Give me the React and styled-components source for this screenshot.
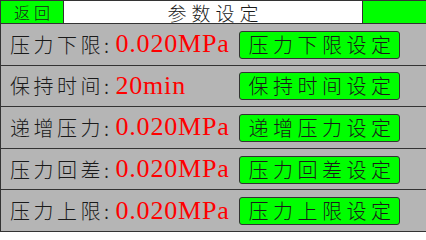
import React from 'react';
import styled, { createGlobalStyle } from 'styled-components';

const GlobalStyle = createGlobalStyle`
  html, body {
    margin: 0;
    padding: 0;
    background: #ffffff;
  }
`

const cjk = `"Noto Sans CJK SC", "Noto Sans", sans-serif`

const Frame = styled.div`
  width: 426px;
  border-top: 1px solid #333;
  border-left: 1px solid #333;
  box-sizing: border-box;
  background: #b5b5b5;
`

const Header = styled.div`
  display: flex;
  height: 23px;
  border-bottom: 1px solid #333;
  box-sizing: border-box;
`

const BackCell = styled.div`
  width: 62px;
  background: #00ff00;
  display: flex;
  align-items: center;
  justify-content: center;
  font-family: ${cjk};
  font-weight: 300;
  font-size: 16px;
  letter-spacing: 4px;
  padding-left: 4px;
  box-sizing: border-box;
  color: #1a1a1a;
  line-height: 1;
`

const TitleCell = styled.div`
  flex: 1;
  background: #ffffff;
  border-left: 1px solid #333;
  border-right: 1px solid #333;
  display: flex;
  align-items: center;
  justify-content: center;
  font-family: ${cjk};
  font-weight: 300;
  font-size: 19px;
  letter-spacing: 5px;
  padding-left: 5px;
  color: #1a1a1a;
  line-height: 1;
`

const SideCell = styled.div`
  width: 63px;
  background: #00ff00;
`

const Row = styled.div`
  display: grid;
  grid-template-columns: 238px 161px;
  align-items: center;
  height: 41.6px;
  border-bottom: 1px solid #333;
  box-sizing: border-box;
`

const Info = styled.div`
  display: flex;
  align-items: center;
  padding-left: 9px;
  white-space: nowrap;
`

const Label = styled.span`
  font-family: ${cjk};
  font-weight: 300;
  font-size: 20px;
  letter-spacing: 3.5px;
  color: #1a1a1a;
`

const Value = styled.span`
  font-family: "Liberation Serif", serif;
  font-size: 26px;
  letter-spacing: 0.8px;
  color: #ff0000;
  margin-left: 3px;
`

const SetButton = styled.button`
  height: 28px;
  width: 161px;
  margin-top: 1px;
  background: #00ff00;
  border: 1px solid #333;
  border-radius: 3px;
  font-family: ${cjk};
  font-weight: 300;
  font-size: 20px;
  letter-spacing: 4.5px;
  padding: 0 0 0 5px;
  color: #1a1a1a;
  line-height: 1;
  display: flex;
  align-items: center;
  justify-content: center;
`

const params = [
  { label: '压力下限', value: '0.020MPa', action: '压力下限设定' },
  { label: '保持时间', value: '20min', action: '保持时间设定' },
  { label: '递增压力', value: '0.020MPa', action: '递增压力设定' },
  { label: '压力回差', value: '0.020MPa', action: '压力回差设定' },
  { label: '压力上限', value: '0.020MPa', action: '压力上限设定' },
]

export default function App() {
  return (
    <>
      <GlobalStyle />
      <Frame>
        <Header>
          <BackCell>返回</BackCell>
          <TitleCell>参数设定</TitleCell>
          <SideCell />
        </Header>
        {params.map((p) => (
          <Row key={p.action}>
            <Info>
              <Label>{p.label}:</Label>
              <Value>{p.value}</Value>
            </Info>
            <SetButton>{p.action}</SetButton>
          </Row>
        ))}
      </Frame>
    </>
  );
}
